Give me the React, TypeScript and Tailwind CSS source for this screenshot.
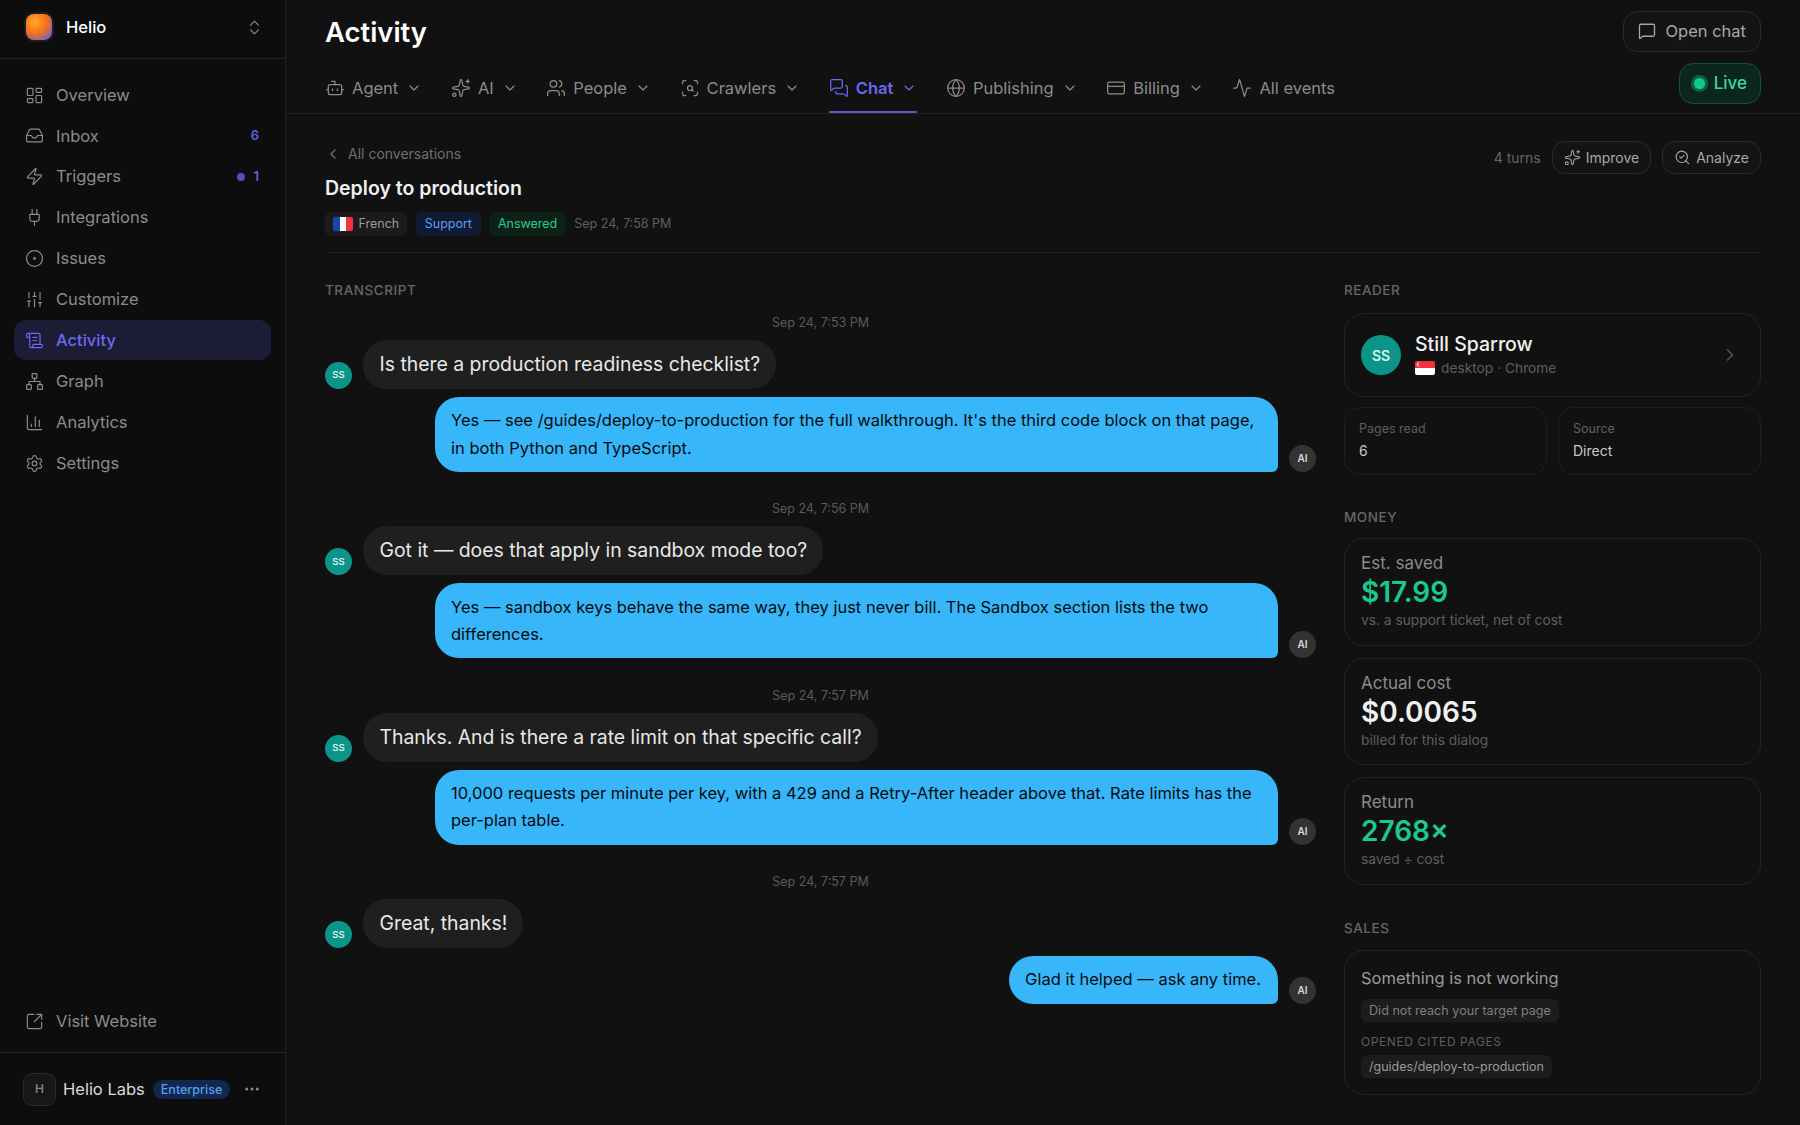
import {
  Activity,
  Bot,
  ChartColumn,
  ChevronDown,
  ChevronLeft,
  ChevronRight,
  ChevronsUpDown,
  CircleDot,
  CreditCard,
  Ellipsis,
  Globe,
  Inbox,
  LayoutDashboard,
  MessageSquare,
  MessagesSquare,
  Network,
  Plug,
  ScanSearch,
  ScrollText,
  SearchCheck,
  Settings,
  SlidersVertical,
  Sparkles,
  SquareArrowOutUpRight,
  Users,
  Zap,
} from "lucide-react"

const navItems = [
  { label: "Overview", icon: LayoutDashboard },
  { label: "Inbox", icon: Inbox, count: "6" },
  { label: "Triggers", icon: Zap, count: "1", dot: true },
  { label: "Integrations", icon: Plug },
  { label: "Issues", icon: CircleDot },
  { label: "Customize", icon: SlidersVertical },
  { label: "Activity", icon: ScrollText, active: true },
  { label: "Graph", icon: Network },
  { label: "Analytics", icon: ChartColumn },
  { label: "Settings", icon: Settings },
]

const tabs = [
  { label: "Agent", icon: Bot, menu: true },
  { label: "AI", icon: Sparkles, menu: true },
  { label: "People", icon: Users, menu: true },
  { label: "Crawlers", icon: ScanSearch, menu: true },
  { label: "Chat", icon: MessagesSquare, menu: true, active: true },
  { label: "Publishing", icon: Globe, menu: true },
  { label: "Billing", icon: CreditCard, menu: true },
  { label: "All events", icon: Activity },
]

const turns = [
  {
    time: "Sep 24, 7:53 PM",
    question: "Is there a production readiness checklist?",
    answer: "Yes — see /guides/deploy-to-production for the full walkthrough. It's the third code block on that page, in both Python and TypeScript.",
  },
  {
    time: "Sep 24, 7:56 PM",
    question: "Got it — does that apply in sandbox mode too?",
    answer: "Yes — sandbox keys behave the same way, they just never bill. The Sandbox section lists the two differences.",
  },
  {
    time: "Sep 24, 7:57 PM",
    question: "Thanks. And is there a rate limit on that specific call?",
    answer: "10,000 requests per minute per key, with a 429 and a Retry-After header above that. Rate limits has the per-plan table.",
  },
  {
    time: "Sep 24, 7:57 PM",
    question: "Great, thanks!",
    answer: "Glad it helped — ask any time.",
  },
]

const money = [
  { label: "Est. saved", value: "$17.99", note: "vs. a support ticket, net of cost", green: true },
  { label: "Actual cost", value: "$0.0065", note: "billed for this dialog" },
  { label: "Return", value: "2768×", note: "saved ÷ cost", green: true },
]

function Sidebar() {
  return (
    <aside className="flex h-full w-[286px] shrink-0 flex-col border-r border-[#232324] bg-[#0d0d0e]">
      <div className="flex h-[59px] items-center border-b border-[#232324] pb-[4px] pl-[26px] pr-[21px]">
        <div className="size-[26px] rounded-[8px] bg-[radial-gradient(circle_at_35%_30%,#fdaa2d_0%,#f97316_45%,#5b5ee0_95%)] ring-2 ring-[#1d1d20]" />
        <span className="ml-[14px] text-[16.5px] font-medium text-white">Helio</span>
        <ChevronsUpDown className="ml-auto size-[19px] text-[#8a8a8a]" strokeWidth={1.5} />
      </div>

      <nav className="flex flex-col gap-[0.9px] px-[14px] pt-[16px]">
        {navItems.map((item) => (
          <div
            key={item.label}
            className={`flex h-[40px] items-center gap-[12.5px] rounded-[12px] pl-[10.5px] pr-[12px] text-[16.5px] ${
              item.active ? "bg-[#1c1c36] font-medium text-[#6a6af0]" : "text-[#8b8b8b]"
            }`}
          >
            <item.icon className="size-[19px] shrink-0" strokeWidth={1.5} />
            <span>{item.label}</span>
            {item.count && (
              <span className="ml-auto flex items-center gap-[9px] text-[13px] font-semibold text-[#5f5fe0]">
                {item.dot && <span className="size-[8px] rounded-full bg-[#4f4fc4]" />}
                {item.count}
              </span>
            )}
          </div>
        ))}
      </nav>

      <div className="mt-auto flex h-[40px] items-center gap-[12.5px] pl-[24.5px] text-[16.5px] text-[#8b8b8b]">
        <SquareArrowOutUpRight className="size-[19px]" strokeWidth={1.5} />
        <span>Visit Website</span>
      </div>
      <div className="mt-[11px] flex h-[73px] items-center border-t border-[#232324] pl-[23px] pr-[24px]">
        <div className="flex size-[33px] items-center justify-center rounded-[9px] border border-[#2a2a2b] bg-[#171718] text-[12px] font-medium text-[#8a8a8a]">
          H
        </div>
        <span className="ml-[7px] text-[16.5px] text-[#dadada]">Helio Labs</span>
        <span className="ml-[8px] rounded-full bg-[#10284d] px-[8px] py-[2px] text-[12.5px] font-medium leading-[15px] text-[#5a9df0]">
          Enterprise
        </span>
        <Ellipsis className="ml-auto size-[18px] text-[#8a8a8a]" />
      </div>
    </aside>
  )
}

function Header() {
  return (
    <header className="relative h-[114px] border-b border-[#232324] px-[39px]">
      <h1 className="pt-[14px] text-[27.4px] font-semibold leading-[36px] text-white">Activity</h1>
      <div className="mt-[13px] flex items-center gap-[28.6px]">
        {tabs.map((tab) => (
          <div
            key={tab.label}
            className={`relative flex h-[50px] items-center text-[16.5px] ${
              tab.active ? "font-semibold text-[#6a6af0]" : "text-[#8b8b8b]"
            }`}
          >
            <tab.icon className="mr-[7px] size-[20px]" strokeWidth={1.5} />
            <span>{tab.label}</span>
            {tab.menu && <ChevronDown className="ml-[8px] size-[16px]" strokeWidth={1.75} />}
            {tab.active && <span className="absolute inset-x-0 bottom-0 h-[2px] rounded-full bg-[#5a5ad0]" />}
          </div>
        ))}
      </div>
      <div className="absolute right-[39px] top-[11px] flex flex-col items-end gap-[11px]">
        <button className="flex h-[41px] items-center gap-[9px] rounded-[14px] border border-[#2a2a2b] bg-[#141415] px-[14px] pb-[1px] text-[16.5px] text-[#a8a8a8]">
          <MessageSquare className="size-[18px]" strokeWidth={1.75} />
          Open chat
        </button>
        <div className="flex h-[41px] items-center gap-[9px] rounded-[14px] border border-[#12523c] bg-[#0b261d] pl-[14px] pr-[13px] text-[17px] font-medium text-[#3fd69c]">
          <span className="size-[11px] rounded-full bg-[#10c98a] ring-[3px] ring-[#136048]" />
          Live
        </div>
      </div>
    </header>
  )
}

function ConversationHead() {
  return (
    <div className="flex items-start justify-between border-b border-[#1f1f20] pb-[16px]">
      <div className="pt-[2px]">
        <div className="flex items-center gap-[7px] text-[14px] text-[#6f6f6f]">
          <ChevronLeft className="size-[16px]" strokeWidth={2} />
          All conversations
        </div>
        <h2 className="mt-[10px] text-[19.5px] font-semibold leading-[28px] text-[#f0f0f0]">Deploy to production</h2>
        <div className="mt-[10px] flex items-center gap-[9px] text-[12.5px]">
          <span className="flex h-[24px] items-center gap-[6px] rounded-[6px] bg-[#1b1b1c] px-[7.5px] text-[#9a9a9a]">
            <svg width="20" height="14" viewBox="0 0 20 14" className="rounded-[2px]">
              <rect width="7" height="14" fill="#1d3fb8" />
              <rect x="7" width="6" height="14" fill="#ffffff" />
              <rect x="13" width="7" height="14" fill="#ef3340" />
            </svg>
            French
          </span>
          <span className="flex h-[24px] items-center rounded-[6px] bg-[#101b33] px-[9px] text-[#5a9df0]">Support</span>
          <span className="-ml-px flex h-[24px] items-center rounded-[6px] bg-[#0e2119] px-[9px] text-[#2ecb8a]">Answered</span>
          <span className="-ml-px text-[#5e5e5e]">Sep 24, 7:58 PM</span>
        </div>
      </div>
      <div className="flex items-center gap-[11px] text-[14px]">
        <span className="text-[#666666]">4 turns</span>
        <button className="flex h-[33px] items-center gap-[5px] rounded-[13px] border border-[#2a2a2b] bg-[#141415] px-[11px] text-[#a8a8a8]">
          <Sparkles className="size-[17px]" strokeWidth={1.5} />
          Improve
        </button>
        <button className="flex h-[33px] items-center gap-[5px] rounded-[13px] border border-[#2a2a2b] bg-[#141415] px-[11px] text-[#a8a8a8]">
          <SearchCheck className="size-[17px]" strokeWidth={1.5} />
          Analyze
        </button>
      </div>
    </div>
  )
}

function SectionLabel({ children }: { children: string }) {
  return <div className="text-[13.5px] font-medium leading-[20px] tracking-[0.04em] text-[#666666]">{children}</div>
}

function Transcript() {
  return (
    <section className="w-[991px] shrink-0">
      <SectionLabel>TRANSCRIPT</SectionLabel>
      <div className="flex flex-col gap-[14.4px]">
        {turns.map((turn) => (
          <div key={turn.question} className="flex flex-col">
            <div className="mt-[14px] text-center text-[12.5px] leading-[18px] text-[#5a5a5a]">{turn.time}</div>
            <div className="mt-[8px] flex items-end gap-[11px]">
              <div className="flex size-[27px] items-center justify-center rounded-full bg-[#0d9488] text-[9.5px] font-semibold text-[#d5f5ef]">
                SS
              </div>
              <div className="rounded-[24px] bg-[#1f1f20] py-[11px] pl-[16.5px] pr-[16px] text-[19.4px] leading-[27px] text-[#e8e8e8]">
                {turn.question}
              </div>
            </div>
            <div className="mt-[8px] flex items-end justify-end gap-[11px]">
              <div className="max-w-[843px] rounded-[24px] rounded-br-[6px] bg-[#38b6fa] py-[10.3px] pl-[16px] pr-[17px] text-[16.5px] leading-[27.2px] text-[#0b0b0b]">
                {turn.answer}
              </div>
              <div className="flex size-[27px] items-center justify-center rounded-full bg-[#333334] text-[10px] font-semibold text-[#d8d8d8]">
                AI
              </div>
            </div>
          </div>
        ))}
      </div>
    </section>
  )
}

function ReaderPanel() {
  return (
    <aside className="flex w-[417px] shrink-0 flex-col">
      <SectionLabel>READER</SectionLabel>
      <div className="mt-[13px] flex h-[84px] items-center rounded-[20px] border border-[#232324] pl-[16px] pr-[20px]">
        <div className="flex size-[40px] items-center justify-center rounded-full bg-[#0d9488] text-[14px] font-semibold text-[#d5f5ef]">
          SS
        </div>
        <div className="ml-[14px]">
          <div className="-mt-[2px] mb-px text-[19.5px] font-medium leading-[26px] text-[#f0f0f0]">Still Sparrow</div>
          <div className="flex items-center gap-[6px] text-[13.75px] leading-[20px] text-[#5e5e5e]">
            <svg width="20" height="14" viewBox="0 0 20 14" className="rounded-[2px]">
              <rect width="20" height="7" fill="#ef3340" />
              <rect y="7" width="20" height="7" fill="#ffffff" />
              <circle cx="4" cy="3.5" r="2" fill="#ffffff" />
              <circle cx="5" cy="3.5" r="1.9" fill="#ef3340" />
            </svg>
            desktop · Chrome
          </div>
        </div>
        <ChevronRight className="ml-auto size-[20px] text-[#555555]" strokeWidth={1.75} />
      </div>
      <div className="mt-[10px] grid grid-cols-2 gap-[11px]">
        <div className="h-[68px] rounded-[16px] border border-[#1f1f20] px-[14px] pt-[12px]">
          <div className="text-[12.5px] leading-[18px] text-[#5e5e5e]">Pages read</div>
          <div className="mt-[3px] text-[14px] leading-[20px] text-[#c8c8c8]">6</div>
        </div>
        <div className="h-[68px] rounded-[16px] border border-[#1f1f20] px-[14px] pt-[12px]">
          <div className="text-[12.5px] leading-[18px] text-[#5e5e5e]">Source</div>
          <div className="mt-[3px] text-[14px] leading-[20px] text-[#c8c8c8]">Direct</div>
        </div>
      </div>

      <div className="mt-[32px]">
        <SectionLabel>MONEY</SectionLabel>
      </div>
      <div className="mt-[11px] flex flex-col gap-[12px]">
        {money.map((card) => (
          <div key={card.label} className="h-[107.5px] rounded-[20px] border border-[#232324] px-[16px] pt-[13px]">
            <div className="text-[17px] leading-[22px] text-[#8b8b8b]">{card.label}</div>
            <div className={`mt-[1px] text-[28px] font-semibold leading-[34px] ${card.green ? "text-[#1cc98a]" : "text-[#f0f0f0]"}`}>
              {card.value}
            </div>
            <div className="mt-[1px] text-[13.75px] leading-[20px] text-[#5e5e5e]">{card.note}</div>
          </div>
        ))}
      </div>

      <div className="mt-[33px]">
        <SectionLabel>SALES</SectionLabel>
      </div>
      <div className="mt-[12px] h-[145px] rounded-[20px] border border-[#232324] px-[16px] pt-[14px]">
        <div className="text-[16.5px] leading-[26px] text-[#9a9a9a]">Something is not working</div>
        <span className="mt-[8px] inline-block rounded-[6px] bg-[#1c1c1d] px-[8px] text-[12.6px] leading-[23px] text-[#7f7f7f]">
          Did not reach your target page
        </span>
        <div className="mt-[11px] text-[12px] leading-[18px] tracking-[0.05em] text-[#5e5e5e]">OPENED CITED PAGES</div>
        <span className="mt-[4px] inline-block rounded-[6px] bg-[#1c1c1d] px-[8px] text-[12.5px] leading-[23px] text-[#9a9a9a]">
          /guides/deploy-to-production
        </span>
      </div>
    </aside>
  )
}

export default function App() {
  return (
    <div className="flex h-[1125px] overflow-hidden bg-[#111112] font-['Inter',sans-serif]">
      <Sidebar />
      <main className="min-w-0 flex-1">
        <Header />
        <div className="px-[39px] pt-[27px]">
          <ConversationHead />
          <div className="mt-[27px] flex gap-[28px]">
            <Transcript />
            <ReaderPanel />
          </div>
        </div>
      </main>
    </div>
  )
}
